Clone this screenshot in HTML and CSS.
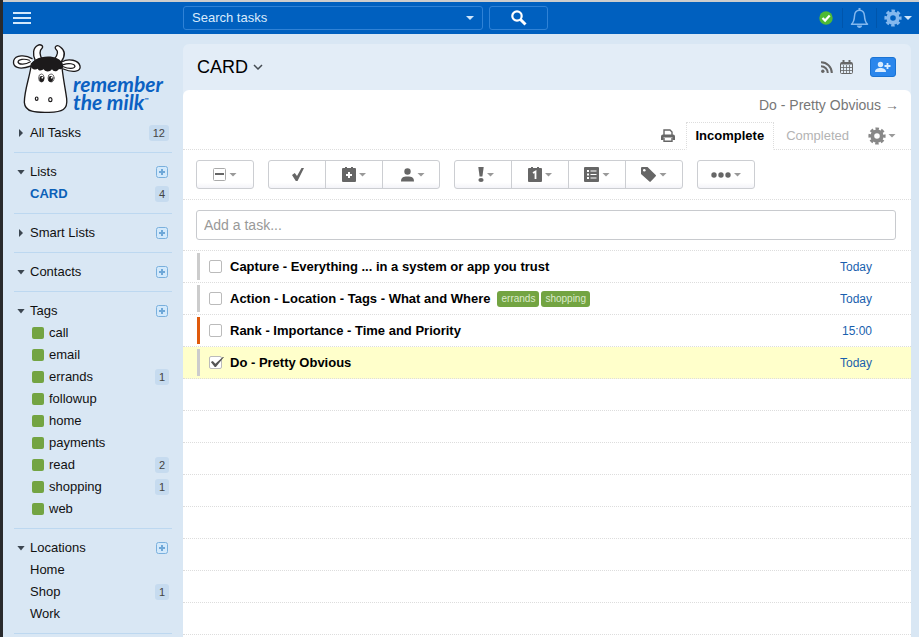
FILE: index.html
```html
<!DOCTYPE html>
<html lang="en">
<head>
<meta charset="utf-8">
<title>Remember The Milk - CARD</title>
<link rel="stylesheet" href="styles.css">
</head>
<body>
<svg width="0" height="0" class="defs" aria-hidden="true">
  <symbol id="gear" viewBox="0 0 18 18"><circle cx="9" cy="9" r="4.7" fill="none" stroke="currentColor" stroke-width="3.8"/><circle cx="9" cy="9" r="7.2" fill="none" stroke="currentColor" stroke-width="2.8" stroke-dasharray="3.4 2.255" stroke-dashoffset="1.7"/></symbol>
  <symbol id="plus" viewBox="0 0 12 12"><rect x=".5" y=".5" width="11" height="11" rx="2" fill="#d3e9fb" stroke="#7ab0dd"/><path d="M6 3v6M3 6h6" stroke="#6fa8d8" stroke-width="2"/></symbol>
</svg>
<header class="topbar">
  <button class="menu" aria-label="Menu"><svg width="18" height="12" viewBox="0 0 18 12"><path d="M0 1h18M0 6h18M0 11h18" stroke="#d3e8fb" stroke-width="2"/></svg></button>
  <form class="search">
    <div class="search-field">
      <input type="text" placeholder="Search tasks" aria-label="Search tasks">
      <span class="caret caret-light"></span>
    </div>
    <button type="button" class="search-go" aria-label="Search"><svg width="16" height="16" viewBox="0 0 16 16"><circle cx="6" cy="6" r="4.7" fill="none" stroke="#fff" stroke-width="2.2"/><path d="M9.5 9.5l5 5" stroke="#fff" stroke-width="3"/></svg></button>
  </form>
  <div class="status">
    <svg width="14" height="14" viewBox="0 0 14 14"><circle cx="7" cy="7" r="6.7" fill="#4fba35"/><path d="M3.5 7l2.6 2.6 4.6-5" fill="none" stroke="#fff" stroke-width="2.2"/></svg>
    <button class="bell" aria-label="Notifications"><svg width="19" height="21" viewBox="0 0 19 21"><path d="M9.500 2.200C6.300 2.200 4.700 4.500 4.500 8c-.2 4-.7 6-3 8.300h16c-2.300-2.300-2.800-4.300-3-8.300-.2-3.500-1.800-5.800-5-5.800z" fill="none" stroke="#84b8ee" stroke-width="1.500" stroke-linejoin="round"/><path d="M9.500 0v2" stroke="#84b8ee" stroke-width="2"/><path d="M6.800 17.500h5.400c-.3 3.200-5.100 3.200-5.400 0z" fill="#84b8ee"/></svg></button>
    <button class="settings" aria-label="Settings"><svg width="18" height="18"><use href="#gear"/></svg><span class="caret caret-light"></span></button>
  </div>
</header>
<div class="layout">
  <nav class="sidebar">
    <a class="logo" href="#">
      <svg width="80" height="80" viewBox="0 0 240 240" fill="#fff" stroke="#1c1a1b" stroke-width="4" stroke-linejoin="round" stroke-linecap="round">
        <path d="M82 68C73 50 75 29 89 22c9-5 19 2 13 9-9 8-7 19 0 33"/>
        <path d="M140 62c8-11 13-20 5-27-9-8 2-17 12-8 15 11 15 27 3 44"/>
        <path d="M72 62C53 49 22 51 17 68c-4 20 16 29 52 16"/>
        <path d="M64 67c-15-6-33-3-34 5 2 9 23 8 37-1" stroke-width="3.500"/>
        <path d="M161 72c21-13 51-5 55 12 4 16-20 22-50 9"/>
        <path d="M166 80c16-6 34-3 35 5-2 8-20 8-35 1" stroke-width="3.500"/>
        <path d="M70 78C67 112 49 155 49 193c2 30 34 31 74 30 40-1 57-8 53-41-5-38-13-70-15-106-22-20-67-23-91 2z"/>
        <path d="M69 86c0-34 84-44 96-6 2 9-5 17-12 13-6 9-17 9-21 1-7 9-19 9-25 0-6 5-15 5-18-2-5 5-18 2-20-6z" fill="#1c1a1b" stroke="none"/>
        <g stroke-width="2"><ellipse cx="100" cy="120" rx="8" ry="12"/><ellipse cx="129" cy="120" rx="9" ry="12"/></g>
        <g fill="#1c1a1b" stroke="none"><ellipse cx="101" cy="123" rx="7" ry="9"/><ellipse cx="128" cy="123" rx="7" ry="9"/></g>
        <g fill="#fff" stroke="none"><circle cx="103" cy="119" r="2.500"/><circle cx="131" cy="119" r="2.500"/></g>
        <g stroke-width="3.500"><ellipse cx="86" cy="182" rx="4" ry="5"/><ellipse cx="127" cy="185" rx="5" ry="6"/></g>
      </svg>
      <span class="wordmark"><span>remember</span><span>the milk<small>™</small></span></span>
    </a>
    <section><a class="row" href="#"><span class="tri tri-right"></span>All Tasks<b class="count">12</b></a></section>
    <section>
      <div class="row"><span class="tri"></span>Lists<button class="add" aria-label="Add list"><svg width="12" height="12"><use href="#plus"/></svg></button></div>
      <a class="row current" href="#">CARD<b class="count">4</b></a>
    </section>
    <section><div class="row"><span class="tri tri-right"></span>Smart Lists<button class="add" aria-label="Add smart list"><svg width="12" height="12"><use href="#plus"/></svg></button></div></section>
    <section><div class="row"><span class="tri"></span>Contacts<button class="add" aria-label="Add contact"><svg width="12" height="12"><use href="#plus"/></svg></button></div></section>
    <section>
      <div class="row"><span class="tri"></span>Tags<button class="add" aria-label="Add tag"><svg width="12" height="12"><use href="#plus"/></svg></button></div>
      <a class="row" href="#"><i class="swatch"></i>call</a>
      <a class="row" href="#"><i class="swatch"></i>email</a>
      <a class="row" href="#"><i class="swatch"></i>errands<b class="count">1</b></a>
      <a class="row" href="#"><i class="swatch"></i>followup</a>
      <a class="row" href="#"><i class="swatch"></i>home</a>
      <a class="row" href="#"><i class="swatch"></i>payments</a>
      <a class="row" href="#"><i class="swatch"></i>read<b class="count">2</b></a>
      <a class="row" href="#"><i class="swatch"></i>shopping<b class="count">1</b></a>
      <a class="row" href="#"><i class="swatch"></i>web</a>
    </section>
    <section>
      <div class="row"><span class="tri"></span>Locations<button class="add" aria-label="Add location"><svg width="12" height="12"><use href="#plus"/></svg></button></div>
      <a class="row" href="#">Home</a>
      <a class="row" href="#">Shop<b class="count">1</b></a>
      <a class="row" href="#">Work</a>
    </section>
  </nav>
  <main class="main">
    <div class="list-head">
      <h1>CARD</h1>
      <svg width="10" height="6" viewBox="0 0 10 6"><path d="M1 1l4 4 4-4" fill="none" stroke="#444b52" stroke-width="1.500"/></svg>
      <div class="list-tools">
        <svg width="12" height="12" viewBox="0 0 12 12" fill="none" stroke="#666" stroke-width="2"><circle cx="1.800" cy="10.200" r="1.700" fill="#666" stroke="none"/><path d="M0 5.200a6.800 6.800 0 0 1 6.800 6.800M0 1.200a10.800 10.800 0 0 1 10.800 10.800"/></svg>
        <svg width="13" height="14" viewBox="0 0 13 14" fill="none" stroke="#666"><rect x=".5" y="2.500" width="12" height="11" rx="1"/><path d="M1 3.500h11" stroke-width="2"/><path d="M3.500 5v8M6.500 5v8M9.500 5v8M1 7.500h11M1 10.500h11" stroke-width=".8"/><path d="M3.500 0v3M9.500 0v3" stroke-width="2"/></svg>
        <button class="share" aria-label="Share list"><svg width="16" height="12" viewBox="0 0 16 12" fill="#d9ecff"><circle cx="5.500" cy="3.500" r="2.700"/><path d="M0 11c0-3 2.500-4 5.500-4s5.500 1 5.500 4z"/><path d="M12.500 2v6M9.500 5h6" stroke="#d9ecff" stroke-width="1.800"/></svg></button>
      </div>
    </div>
    <div class="panel">
      <div class="next"><a href="#">Do - Pretty Obvious →</a></div>
      <div class="tabs">
        <button class="print" aria-label="Print"><svg width="14" height="13" viewBox="0 0 14 13"><path d="M3 6V1h6l2 2v3" fill="none" stroke="#666" stroke-width="1.400"/><path d="M2 5.500h10a2 2 0 0 1 2 2V11h-2.500V8.500h-9V11H0V7.500a2 2 0 0 1 2-2z" fill="#666"/><path d="M3 9v3.300h8V9" fill="none" stroke="#666" stroke-width="1.400"/></svg></button>
        <button class="tab active">Incomplete</button>
        <button class="tab">Completed</button>
        <button class="options" aria-label="View options"><svg width="18" height="18"><use href="#gear"/></svg><span class="caret"></span></button>
      </div>
      <div class="toolbar">
        <div class="group">
          <button aria-label="Select"><svg width="13" height="13" viewBox="0 0 13 13"><rect x=".5" y=".5" width="12" height="12" rx="1" fill="#fff" stroke="#aaa"/><path d="M2 6h9" stroke="#666" stroke-width="2"/></svg><span class="caret"></span></button>
        </div>
        <div class="group">
          <button aria-label="Complete"><svg class="solo" width="12" height="13" viewBox="0 0 12 13"><path d="M0 7L2.800 5 5 8 9.500 0H12L5.500 13H3.800z" fill="#666"/></svg></button>
          <button aria-label="Postpone"><svg width="14" height="15" viewBox="0 0 14 15"><path d="M1 1h2V0h2v1h4V0h2v1h2a1 1 0 0 1 1 1v12a1 1 0 0 1-1 1H1a1 1 0 0 1-1-1V2a1 1 0 0 1 1-1z" fill="#666"/><path d="M7 5v6M4 8h6" stroke="#fff" stroke-width="2"/></svg><span class="caret"></span></button>
          <button aria-label="Assign"><svg width="17" height="14" viewBox="-4 0 17 14" fill="#666"><circle cx="6.500" cy="3.500" r="3.200"/><path d="M0 13.500c0-4 2-5 6.500-5s6.500 1 6.500 5z"/></svg><span class="caret"></span></button>
        </div>
        <div class="group">
          <button aria-label="Priority"><svg width="12" height="15" viewBox="-6 0 12 15" fill="#666"><path d="M.3 0h5.400L4.400 9.500H1.600z"/><ellipse cx="3" cy="13" rx="2.600" ry="2"/></svg><span class="caret"></span></button>
          <button aria-label="Due date"><svg width="14" height="15" viewBox="0 0 14 15"><path d="M1 1h2V0h2v1h4V0h2v1h2a1 1 0 0 1 1 1v12a1 1 0 0 1-1 1H1a1 1 0 0 1-1-1V2a1 1 0 0 1 1-1z" fill="#666"/><path d="M5 6l2.500-1.500V12" fill="none" stroke="#fff" stroke-width="1.800"/></svg><span class="caret"></span></button>
          <button aria-label="Move to list"><svg width="15" height="15" viewBox="0 0 15 15"><rect width="15" height="15" rx="1" fill="#666"/><path d="M3 4h2M3 7.500h2M3 11h2" stroke="#fff" stroke-width="2"/><path d="M6.500 4h6M6.500 7.500h6M6.500 11h6" stroke="#fff" stroke-width="1.200"/></svg><span class="caret"></span></button>
          <button aria-label="Tags"><svg width="15" height="15" viewBox="0 0 15 15"><path d="M0 1a1 1 0 0 1 1-1h5.500l8.200 8c.4.400.4.900 0 1.300l-5 5.300c-.4.400-.9.400-1.300 0L0 7z" fill="#666"/><circle cx="3.300" cy="3.300" r="1.300" fill="#fff"/></svg><span class="caret"></span></button>
        </div>
        <div class="group">
          <button aria-label="More"><svg width="20" height="6" viewBox="0 0 20 6" fill="#666"><circle cx="3" cy="3" r="2.700"/><circle cx="10" cy="3" r="2.700"/><circle cx="17" cy="3" r="2.700"/></svg><span class="caret"></span></button>
        </div>
      </div>
      <div class="add-task"><input type="text" placeholder="Add a task..." aria-label="Add a task"></div>
      <ul class="tasks">
        <li><input type="checkbox" id="t1"><label for="t1">Capture - Everything ... in a system or app you trust</label><a class="due" href="#">Today</a></li>
        <li><input type="checkbox" id="t2"><label for="t2">Action - Location - Tags - What and Where</label><span class="tags"><a class="tag" href="#">errands</a><a class="tag" href="#">shopping</a></span><a class="due" href="#">Today</a></li>
        <li class="high"><input type="checkbox" id="t3"><label for="t3">Rank - Importance - Time and Priority</label><a class="due" href="#">15:00</a></li>
        <li class="selected"><input type="checkbox" id="t4" checked><label for="t4">Do - Pretty Obvious</label><a class="due" href="#">Today</a></li>
      </ul>
      <div class="ruled" aria-hidden="true"><div></div><div></div><div></div><div></div><div></div><div></div><div></div><div></div></div>
    </div>
  </main>
</div>
</body>
</html>
```
FILE: styles.css
```css
* { box-sizing: border-box; }
body {
  margin: 0;
  min-height: 100vh;
  display: flex;
  flex-direction: column;
  border-left: 3px solid #2a2a2c;
  background: #d9e7f4;
  color: #111;
  font: 13px/22px "Liberation Sans", Arial, sans-serif;
}
a { color: inherit; text-decoration: none; }
button { padding: 0; border: 0; background: none; font: inherit; color: inherit; }
input { font: inherit; margin: 0; }
svg { display: block; flex: none; }
.defs { position: absolute; }

.caret {
  flex: none;
  width: 8px;
  height: 4px;
  background: #999;
  clip-path: polygon(0 0, 100% 0, 50% 100%);
}
.caret-light { background: #cfe5fb; }

.topbar {
  display: flex;
  align-items: center;
  height: 34px;
  border-top: 2px solid #cdcdcd;
  background: #0060bf;
}
.menu { width: 180px; padding-left: 10px; }
.search { display: flex; gap: 6px; }
.search-field {
  display: flex;
  align-items: center;
  width: 300px;
  height: 24px;
  padding: 0 8px;
  border: 1px solid #2f82d6;
  border-radius: 3px;
}
.search-field input {
  flex: 1;
  min-width: 0;
  padding: 0;
  border: 0;
  outline: 0;
  background: none;
  color: #fff;
}
.search-field input::placeholder { color: #d9ebfc; }
.search-go {
  display: flex;
  align-items: center;
  justify-content: center;
  width: 59px;
  height: 24px;
  border: 1px solid #2f82d6;
  border-radius: 3px;
}
.status { display: flex; align-items: center; margin-left: auto; padding-right: 7px; }
.bell {
  height: 20px;
  margin-left: 9px;
  padding: 0 7px;
  border: solid #0055ab;
  border-width: 0 1px;
}
.settings { display: flex; align-items: center; gap: 2px; margin-left: 7px; color: #84b8ee; }

.layout { flex: 1; display: flex; }
.sidebar { width: 180px; flex: none; padding: 4px 11px 0; }
.logo { display: flex; height: 76px; margin-left: -6px; }
.wordmark {
  display: flex;
  flex-direction: column;
  margin: 37px 0 0 -15px;
  color: #0b61c2;
  font: italic bold 21px/18px "Lato", sans-serif;
  white-space: nowrap;
}
.wordmark > span { display: flex; }
.wordmark small { font-size: 6px; line-height: 14px; }
.sidebar section { padding: 8px 0; border-bottom: 1px solid #bdd8f0; }
.row { display: flex; align-items: center; height: 22px; padding: 0 4px 0 16px; }
.sidebar section > .row { margin-right: -1px; }
.tri {
  width: 8px;
  height: 5px;
  margin: 0 5px 0 -13px;
  background: #3c4650;
  clip-path: polygon(0 0, 100% 0, 50% 100%);
}
.tri-right { height: 8px; clip-path: polygon(25% 0, 75% 50%, 25% 100%); }
.count {
  margin-left: auto;
  padding: 0 4px;
  border-radius: 3px;
  background: #c6dbef;
  color: #444;
  font-size: 11px;
  font-weight: normal;
  line-height: 16px;
}
.add { margin-left: auto; margin-right: 1px; }
.current { color: #0b61b8; font-weight: bold; }
.swatch { width: 12px; height: 12px; margin: 0 5px 0 2px; border-radius: 2px; background: #73a442; }

.main {
  flex: 1;
  min-width: 0;
  display: flex;
  flex-direction: column;
  margin: 10px 8px 0 0;
  border-radius: 6px 6px 0 0;
  background: #e3edf7;
}
.list-head { display: flex; align-items: center; gap: 5px; height: 46px; padding: 0 15px 0 14px; }
h1 { margin: 0; color: #000; font-size: 18px; font-weight: normal; }
.list-tools { display: flex; align-items: center; gap: 7px; margin-left: auto; }
.share {
  display: flex;
  align-items: center;
  justify-content: center;
  width: 26px;
  height: 20px;
  margin-left: 10px;
  border: 1px solid #1a73d3;
  border-radius: 3px;
  background: #2a86ec;
}
.panel { flex: 1; border-radius: 6px 6px 0 0; background: #fff; }
.next { height: 32px; padding-right: 12px; color: #777; font-size: 14px; line-height: 30px; text-align: right; }
.tabs {
  display: flex;
  align-items: center;
  justify-content: flex-end;
  height: 28px;
  padding-right: 15px;
  border-bottom: 1px dotted #ddd;
}
.print { margin-right: 11px; }
.tab { height: 28px; padding: 0 12px; color: #b3b3b3; }
.tab.active {
  padding: 0 9px;
  border: 1px dotted #ddd;
  border-bottom: 1px solid #fff;
  background: #fff;
  color: #000;
  font-weight: bold;
}
.options { display: flex; align-items: center; gap: 2px; margin-left: 7px; color: #888; }
.toolbar { display: flex; gap: 14px; padding: 10px 13px; border-bottom: 1px dotted #ddd; }
.group { display: flex; height: 29px; border: 1px solid #ccced2; border-radius: 3px; background: linear-gradient(#fff 80%, #f3f3f8); }
.group button { display: flex; align-items: center; justify-content: center; gap: 3px; width: 56px; }
.group button + button { width: 57px; border-left: 1px solid #ccced2; }
.group .solo { margin-left: 2px; }
.add-task { padding: 10px 15px 10px 13px; border-bottom: 1px dotted #ddd; }
.add-task input {
  display: block;
  width: 100%;
  height: 30px;
  padding: 0 7px;
  border: 1px solid #c8cace;
  border-radius: 3px;
  font-size: 14px;
}
.add-task input::placeholder { color: #999; }
.tasks { margin: 0; padding: 0; list-style: none; }
.tasks li {
  display: flex;
  align-items: center;
  height: 32px;
  padding: 0 39px 0 14px;
  border-bottom: 1px dotted #ddd;
}
.tasks li::before { content: ""; width: 3px; height: 27px; margin-right: 9px; background: #ccc; }
.tasks .high::before { background: #e05a0c; }
.tasks .selected { background: #ffffcb; }
.tasks input {
  appearance: none;
  width: 13px;
  height: 13px;
  margin-right: 8px;
  border: 1px solid #bbb;
  border-radius: 2px;
  background: #fff;
}
.tasks input:checked::after {
  content: "";
  display: block;
  width: 14px;
  height: 10px;
  background: #555;
  clip-path: polygon(6% 50%, 20% 40%, 38% 68%, 92% 0, 100% 0, 42% 100%, 34% 100%);
}
.tasks label { color: #000; font-weight: bold; }
.tags { display: flex; gap: 2px; margin-left: 7px; }
.tag { padding: 0 4px; border-radius: 3px; background: #73a442; color: #dcebcc; font-size: 10px; line-height: 16px; }
.due { margin-left: auto; color: #1a5fae; font-size: 12px; }
.ruled div { height: 32px; border-bottom: 1px dotted #ddd; }
```
